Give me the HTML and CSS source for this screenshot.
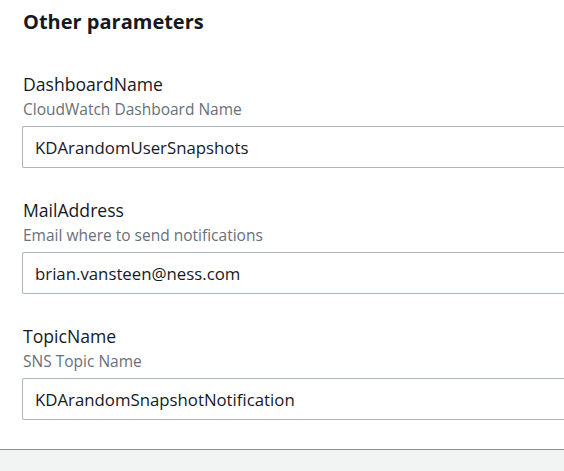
FILE: index.html
```html
<!DOCTYPE html>
<html>
<head>
<meta charset="utf-8">
<link rel="stylesheet" href="styles.css">
</head>
<body>
<div class="page">
  <section class="panel">
    <h2 class="title">Other parameters</h2>
    <div class="field">
      <div class="label">DashboardName</div>
      <div class="desc">CloudWatch Dashboard Name</div>
      <div class="input">KDArandomUserSnapshots</div>
    </div>
    <div class="field">
      <div class="label">MailAddress</div>
      <div class="desc">Email where to send notifications</div>
      <div class="input">brian.vansteen@ness.com</div>
    </div>
    <div class="field">
      <div class="label">TopicName</div>
      <div class="desc">SNS Topic Name</div>
      <div class="input">KDArandomSnapshotNotification</div>
    </div>
  </section>
  <footer class="footer"></footer>
</div>
</body>
</html>
```

FILE: styles.css
```css
html, body {
  margin: 0;
  padding: 0;
  background: #ffffff;
  overflow: hidden;
}
body {
  font-family: "Open Sans", "Noto Sans", sans-serif;
  color: #16191f;
}
.page {
  width: 564px;
  height: 471px;
  display: flex;
  flex-direction: column;
  overflow: hidden;
}
.panel {
  flex: 1;
  padding: 8px 0 0 22px;
  display: flex;
  flex-direction: column;
  min-width: 0;
}
.title {
  margin: 0;
  font-size: 20px;
  font-weight: 700;
  line-height: 28px;
  padding-left: 1px;
}
.field {
  display: flex;
  flex-direction: column;
  margin-top: 36px;
}
.field + .field {
  margin-top: 30px;
}
.label {
  font-size: 17.6px;
  line-height: 24px;
  padding-left: 1px;
}
.desc {
  font-size: 15.5px;
  line-height: 22px;
  margin-top: 2px;
  color: #687078;
  padding-left: 1px;
  margin-bottom: 6px;
}
.input {
  width: 560px;
  height: 42px;
  box-sizing: border-box;
  border: 1px solid #aab7b8;
  border-right: none;
  border-radius: 2px 0 0 2px;
  padding: 0 12px;
  font-size: 16.8px;
  display: flex;
  align-items: center;
}
.footer {
  height: 21px;
  border-top: 1px solid #879596;
  background: #f2f3f3;
}
```
